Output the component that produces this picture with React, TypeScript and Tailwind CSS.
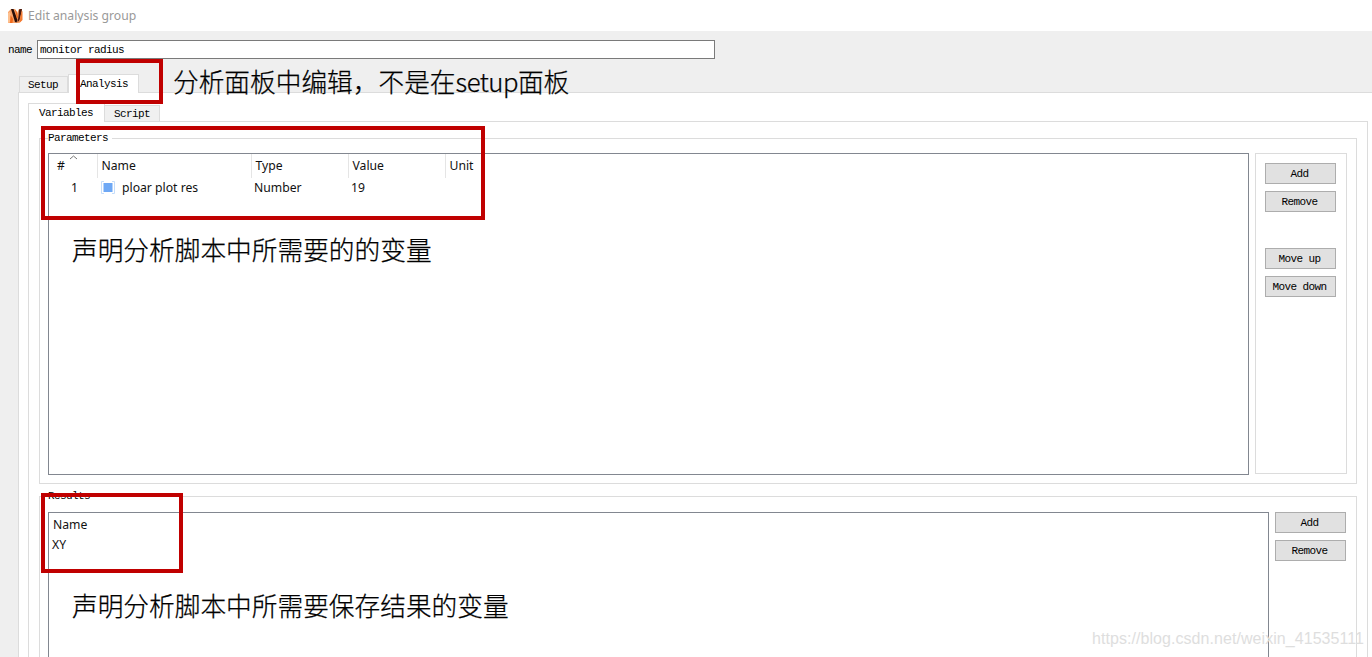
import type { ReactNode } from "react";

const MONO =
  "font-['Liberation_Mono','Noto_Sans_CJK_SC',monospace] text-[11px] tracking-[-0.6px] leading-3 text-black";
const UI = "font-['Noto_Sans','Noto_Sans_CJK_SC',sans-serif] text-[12.2px] leading-4 text-[#111]";

function Logo() {
  return (
    <svg width="15" height="16" viewBox="0 0 15 16">
      <path d="M0 4 3 1 7 1 9 5 11 1 14 1 14 12 11 15 0 15Z" fill="#f9a268" />
      <path d="M0 5 2 4 3.5 10 2 14 0 15Z" fill="#fdc08f" />
      <path d="M3 1 5.5 1 9.5 12 8.5 14.5 7 14Z" fill="#2a0d08" />
      <path d="M2.5 7 5 11 4.5 15 2 15Z" fill="#f26a1c" />
      <path d="M7 1.5 8.5 3 10 9 9 11Z" fill="#f26a1c" />
      <path d="M11 1.5 12.5 1 14 1 13 6 11.5 12 9.5 14.5 10.5 8Z" fill="#4a1a0e" />
      <path d="M13.5 4 14.5 3 14.5 12 11.5 15 12 11Z" fill="#f47a30" />
    </svg>
  );
}

function Button({ children }: { children: ReactNode }) {
  return (
    <button className={`h-[21px] w-[71px] shrink-0 border border-[#adadad] bg-[#e1e1e1] pr-0.5 ${MONO}`}>
      {children}
    </button>
  );
}

interface GroupProps {
  title: string;
  className: string;
  children: ReactNode;
}

function Group({ title, className, children }: GroupProps) {
  return (
    <section className={`w-[1318px] shrink-0 border border-[#dcdcdc] ${className}`}>
      <h2 className={`-mt-[7px] ml-2 w-fit bg-white pr-1 ${MONO}`}>{title}</h2>
      {children}
    </section>
  );
}

function Highlight({ className }: { className: string }) {
  return <div className={`absolute border-4 border-[#c00000] ${className}`} />;
}

function Note({ className, children }: { className: string; children: ReactNode }) {
  return (
    <p
      className={`absolute whitespace-nowrap font-['Noto_Sans_CJK_SC_Light','Noto_Sans_CJK_SC',sans-serif] text-[25.7px] font-light leading-8 text-black [-webkit-text-stroke:0.25px_black] ${className}`}
    >
      {children}
    </p>
  );
}

export default function App() {
  return (
    <div className="relative flex h-[657px] w-[1372px] flex-col overflow-hidden bg-[#efefef]">
      <header className="flex h-[31px] shrink-0 items-center gap-[5px] bg-white pl-2">
        <Logo />
        <h1 className={`${UI} pt-px !text-[#999]`}>Edit analysis group</h1>
      </header>

      <div className="flex h-[43px] shrink-0 pt-[9px] pl-2">
        <label className={`mt-1 w-[29px] ${MONO}`}>name</label>
        <div className={`h-[19px] w-[678px] border border-[#7a7a7a] bg-white pt-[3px] pl-0.5 ${MONO}`}>
          monitor radius
        </div>
      </div>

      <nav className="z-10 flex h-[19px] shrink-0 items-end pl-[19px]">
        <span className={`mb-px h-4 w-[49px] border border-b-0 border-[#dcdcdc] pt-0.5 pl-2 ${MONO}`}>
          Setup
        </span>
        <span className={`h-[19px] w-[71px] border border-b-0 border-[#dcdcdc] bg-white pt-[3px] pl-[11px] ${MONO}`}>
          Analysis
        </span>
      </nav>

      <main className="-mt-px ml-[18px] flex flex-1 flex-col border-t border-l border-[#dcdcdc] bg-white pt-[10px] pl-[9px]">
        <nav className="z-10 flex h-[19px] shrink-0 items-end">
          <span className={`h-[19px] w-[77px] border border-b-0 border-[#dcdcdc] bg-white pt-[3px] pl-[10px] ${MONO}`}>
            Variables
          </span>
          <span className={`mb-px h-4 w-[55px] border border-b-0 border-l-0 border-[#dcdcdc] bg-[#f0f0f0] pt-0.5 pl-[9px] ${MONO}`}>
            Script
          </span>
        </nav>

        <div className="-mt-px flex w-[1340px] flex-1 flex-col border border-b-0 border-[#dcdcdc] pt-4 pl-[10px]">
          <Group title="Parameters" className="h-[346px]">
            <div className="mt-[9px] flex gap-[6px] pl-2">
              <div className="h-[322px] w-[1201px] border border-[#828790]">
                <table className={`table-fixed border-collapse ${UI}`}>
                  <colgroup>
                    <col className="w-12" />
                    <col className="w-[154px]" />
                    <col className="w-[97px]" />
                    <col className="w-[97px]" />
                    <col className="w-[50px]" />
                  </colgroup>
                  <thead>
                    <tr className="h-[24px] text-left [&>th]:p-0 [&>th]:font-normal">
                      <th className="relative border-r border-[#e5e5e5]">
                        <span className="pl-2">#</span>
                        <svg className="absolute top-px left-[20px]" width="9" height="5" viewBox="0 0 9 5">
                          <path d="M1 4 4.5 1 8 4" fill="none" stroke="#777" />
                        </svg>
                      </th>
                      <th className="border-r border-[#e5e5e5]">
                        <span className="pl-1">Name</span>
                      </th>
                      <th className="border-r border-[#e5e5e5]">
                        <span className="pl-1">Type</span>
                      </th>
                      <th className="border-r border-[#e5e5e5]">
                        <span className="pl-1">Value</span>
                      </th>
                      <th>
                        <span className="pl-1">Unit</span>
                      </th>
                    </tr>
                  </thead>
                  <tbody>
                    <tr className="h-5 [&>td]:p-0">
                      <td>
                        <span className="pl-[22px]">1</span>
                      </td>
                      <td>
                        <span className="flex items-center gap-[7px] pl-1">
                          <svg width="14" height="14" viewBox="0 0 14 14">
                            <path d="M3 .5H.5V12.5H3M11 .5H13.5V12.5H11" fill="none" stroke="#c5ddfa" />
                            <rect x="2.5" y="2" width="9" height="9" fill="#6ea8f5" />
                          </svg>
                          ploar plot res
                        </span>
                      </td>
                      <td>
                        <span className="pl-[3px]">Number</span>
                      </td>
                      <td>
                        <span className="pl-[3px]">19</span>
                      </td>
                      <td />
                    </tr>
                  </tbody>
                </table>
              </div>
              <div className="flex h-[321px] w-[92px] flex-col gap-[7px] border border-[#dcdcdc] pt-[9px] pl-[9px]">
                <Button>Add</Button>
                <Button>Remove</Button>
                <div className="h-[22px]" />
                <Button>Move up</Button>
                <Button>Move down</Button>
              </div>
            </div>
          </Group>

          <Group title="Results" className="mt-3 h-[200px]">
            <div className="mt-[10px] flex gap-[6px] pl-2">
              <div className={`h-[180px] w-[1221px] border border-[#828790] pt-1 ${UI}`}>
                <div className="h-5 pl-1">Name</div>
                <div className="pl-[3px]">XY</div>
              </div>
              <div className="flex flex-col gap-[7px]">
                <Button>Add</Button>
                <Button>Remove</Button>
              </div>
            </div>
          </Group>
        </div>
      </main>

      <div className="pointer-events-none absolute inset-0 z-20">
        <Highlight className="top-[59px] left-[76px] h-[45px] w-[87px]" />
        <Highlight className="top-[126px] left-[41px] h-[94px] w-[444px]" />
        <Highlight className="top-[493px] left-[41px] h-[80px] w-[142px]" />
        <Note className="top-[65px] left-[173px]">
          分析面板中编辑，不是在<span className="tracking-[-0.5px]">setup</span>面板
        </Note>
        <Note className="top-[233px] left-[72px]">声明分析脚本中所需要的的变量</Note>
        <Note className="top-[589px] left-[72px]">声明分析脚本中所需要保存结果的变量</Note>
        <p className="absolute top-[629px] left-[1092px] font-['Liberation_Sans',sans-serif] text-base leading-5 tracking-[0.06px] whitespace-nowrap text-[#dedede]">
          https://blog.csdn.net/weixin_41535111
        </p>
      </div>
    </div>
  );
}
